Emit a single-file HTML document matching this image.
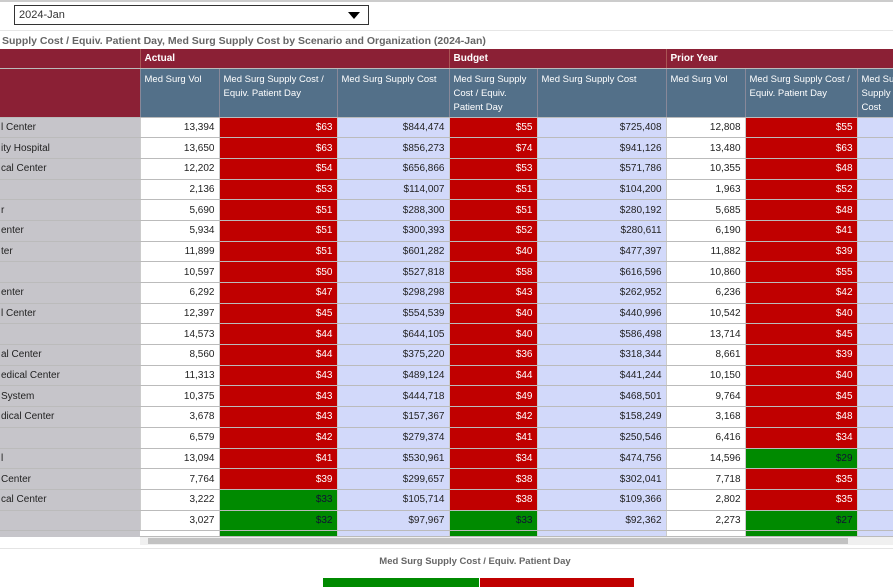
<!DOCTYPE html><html><head><style>
body{margin:0;width:893px;height:587px;overflow:hidden;background:#fff;font-family:"Liberation Sans",sans-serif;position:relative}
.dd{position:absolute;left:14px;top:5px;width:355px;border:1px solid #333;font-size:11px;color:#333;line-height:18px;padding-left:4px;box-sizing:border-box;height:20px}
.dd:after{content:"";position:absolute;right:8px;top:6px;border-left:6px solid transparent;border-right:6px solid transparent;border-top:7px solid #000}
.title{position:absolute;left:2px;top:35px;font-size:10.5px;font-weight:bold;color:#666;white-space:nowrap}
table{position:absolute;left:0;top:49px;width:917px;border-collapse:collapse;table-layout:fixed;font-size:10px}
td{padding:0 4px;height:20.7px;box-sizing:border-box;text-align:right;white-space:nowrap;overflow:hidden;border-bottom:1px solid #bbb;border-right:1px solid #ccc}
td.l{background:#c6c5ca;text-align:left;color:#222;padding-left:1px}
td.w{background:#fff;color:#222}
td.r{background:#c00000;color:#fff}
td.g{background:#008a00;color:#113}
td.p{background:#d2d9fa;color:#222}
.h1 td{background:#8b2035;color:#fff;text-align:left;font-weight:bold;height:19px;border-right:1px solid #a55}
.h2 td{background:#537089;color:#fff;text-align:left;vertical-align:top;height:49px;padding-top:4px;line-height:14px;white-space:normal;border-right:1px solid #889;border-top:1px solid #7cc;font-size:9.5px}
.h2 td.m{background:#8b2035;border-top:none}
</style></head><body>
<div style="position:absolute;left:0;top:0;width:893px;height:2px;background:#ccc"></div>
<div class="dd">2024-Jan</div>
<div style="position:absolute;left:0;top:30px;width:893px;height:1px;background:#e6e6e6"></div>
<div class="title">Supply Cost / Equiv. Patient Day, Med Surg Supply Cost by Scenario and Organization (2024-Jan)</div>
<table>
<colgroup><col style="width:140px"><col style="width:79px"><col style="width:118px"><col style="width:112px"><col style="width:88px"><col style="width:129px"><col style="width:79px"><col style="width:112px"><col style="width:60px"></colgroup>
<tr class="h1"><td></td><td colspan="3">Actual</td><td colspan="2">Budget</td><td colspan="3">Prior Year</td></tr>
<tr class="h2"><td class="m"></td><td>Med Surg Vol</td><td>Med Surg Supply Cost / Equiv. Patient Day</td><td>Med Surg Supply Cost</td><td>Med Surg Supply Cost / Equiv. Patient Day</td><td>Med Surg Supply Cost</td><td>Med Surg Vol</td><td>Med Surg Supply Cost / Equiv. Patient Day</td><td>Med Surg Supply Cost</td></tr>
<tr><td class="l">l Center</td><td class="w">13,394</td><td class="r">$63</td><td class="p">$844,474</td><td class="r">$55</td><td class="p">$725,408</td><td class="w">12,808</td><td class="r">$55</td><td class="p"></td></tr>
<tr><td class="l">ity Hospital</td><td class="w">13,650</td><td class="r">$63</td><td class="p">$856,273</td><td class="r">$74</td><td class="p">$941,126</td><td class="w">13,480</td><td class="r">$63</td><td class="p"></td></tr>
<tr><td class="l">cal Center</td><td class="w">12,202</td><td class="r">$54</td><td class="p">$656,866</td><td class="r">$53</td><td class="p">$571,786</td><td class="w">10,355</td><td class="r">$48</td><td class="p"></td></tr>
<tr><td class="l"></td><td class="w">2,136</td><td class="r">$53</td><td class="p">$114,007</td><td class="r">$51</td><td class="p">$104,200</td><td class="w">1,963</td><td class="r">$52</td><td class="p"></td></tr>
<tr><td class="l">r</td><td class="w">5,690</td><td class="r">$51</td><td class="p">$288,300</td><td class="r">$51</td><td class="p">$280,192</td><td class="w">5,685</td><td class="r">$48</td><td class="p"></td></tr>
<tr><td class="l">enter</td><td class="w">5,934</td><td class="r">$51</td><td class="p">$300,393</td><td class="r">$52</td><td class="p">$280,611</td><td class="w">6,190</td><td class="r">$41</td><td class="p"></td></tr>
<tr><td class="l">ter</td><td class="w">11,899</td><td class="r">$51</td><td class="p">$601,282</td><td class="r">$40</td><td class="p">$477,397</td><td class="w">11,882</td><td class="r">$39</td><td class="p"></td></tr>
<tr><td class="l"></td><td class="w">10,597</td><td class="r">$50</td><td class="p">$527,818</td><td class="r">$58</td><td class="p">$616,596</td><td class="w">10,860</td><td class="r">$55</td><td class="p"></td></tr>
<tr><td class="l">enter</td><td class="w">6,292</td><td class="r">$47</td><td class="p">$298,298</td><td class="r">$43</td><td class="p">$262,952</td><td class="w">6,236</td><td class="r">$42</td><td class="p"></td></tr>
<tr><td class="l">l Center</td><td class="w">12,397</td><td class="r">$45</td><td class="p">$554,539</td><td class="r">$40</td><td class="p">$440,996</td><td class="w">10,542</td><td class="r">$40</td><td class="p"></td></tr>
<tr><td class="l"></td><td class="w">14,573</td><td class="r">$44</td><td class="p">$644,105</td><td class="r">$40</td><td class="p">$586,498</td><td class="w">13,714</td><td class="r">$45</td><td class="p"></td></tr>
<tr><td class="l">al Center</td><td class="w">8,560</td><td class="r">$44</td><td class="p">$375,220</td><td class="r">$36</td><td class="p">$318,344</td><td class="w">8,661</td><td class="r">$39</td><td class="p"></td></tr>
<tr><td class="l">edical Center</td><td class="w">11,313</td><td class="r">$43</td><td class="p">$489,124</td><td class="r">$44</td><td class="p">$441,244</td><td class="w">10,150</td><td class="r">$40</td><td class="p"></td></tr>
<tr><td class="l">System</td><td class="w">10,375</td><td class="r">$43</td><td class="p">$444,718</td><td class="r">$49</td><td class="p">$468,501</td><td class="w">9,764</td><td class="r">$45</td><td class="p"></td></tr>
<tr><td class="l">dical Center</td><td class="w">3,678</td><td class="r">$43</td><td class="p">$157,367</td><td class="r">$42</td><td class="p">$158,249</td><td class="w">3,168</td><td class="r">$48</td><td class="p"></td></tr>
<tr><td class="l"></td><td class="w">6,579</td><td class="r">$42</td><td class="p">$279,374</td><td class="r">$41</td><td class="p">$250,546</td><td class="w">6,416</td><td class="r">$34</td><td class="p"></td></tr>
<tr><td class="l">l</td><td class="w">13,094</td><td class="r">$41</td><td class="p">$530,961</td><td class="r">$34</td><td class="p">$474,756</td><td class="w">14,596</td><td class="g">$29</td><td class="p"></td></tr>
<tr><td class="l">Center</td><td class="w">7,764</td><td class="r">$39</td><td class="p">$299,657</td><td class="r">$38</td><td class="p">$302,041</td><td class="w">7,718</td><td class="r">$35</td><td class="p"></td></tr>
<tr><td class="l">cal Center</td><td class="w">3,222</td><td class="g">$33</td><td class="p">$105,714</td><td class="r">$38</td><td class="p">$109,366</td><td class="w">2,802</td><td class="r">$35</td><td class="p"></td></tr>
<tr><td class="l"></td><td class="w">3,027</td><td class="g">$32</td><td class="p">$97,967</td><td class="g">$33</td><td class="p">$92,362</td><td class="w">2,273</td><td class="g">$27</td><td class="p"></td></tr>
<tr><td class="l" style="height:6px;border:none"></td><td class="w" style="height:6px"></td><td class="g" style="height:6px"></td><td class="p" style="height:6px"></td><td class="g" style="height:6px"></td><td class="p" style="height:6px"></td><td class="w" style="height:6px"></td><td class="g" style="height:6px"></td><td class="p" style="height:6px"></td></tr>
</table>
<div style="position:absolute;left:140px;top:537px;width:753px;height:8px;background:#f0f0f0"></div>
<div style="position:absolute;left:148px;top:538px;width:700px;height:6px;background:#c2c2c2"></div>
<div style="position:absolute;left:0;top:548px;width:893px;height:1px;background:#e4e4e4"></div>
<div style="position:absolute;left:0;top:556px;width:950px;text-align:center;font-size:9.5px;color:#666;font-weight:bold">Med Surg Supply Cost / Equiv. Patient Day</div>
<div style="position:absolute;left:323px;top:578px;width:156px;height:9px;background:#008a00"></div>
<div style="position:absolute;left:480px;top:578px;width:154px;height:9px;background:#c00000"></div>
</body></html>
